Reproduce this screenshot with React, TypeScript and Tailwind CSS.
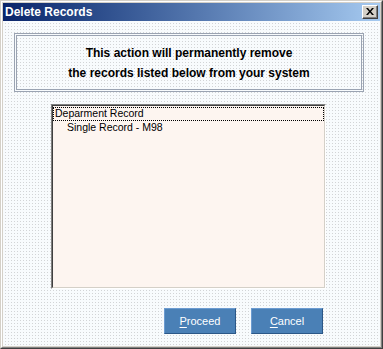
import React from "react";

const font = { fontFamily: '"Liberation Sans", Arial, sans-serif' };

const records = [
  { id: 1, label: "Deparment Record", depth: 0, focused: true },
  { id: 2, label: "Single Record - M98", depth: 1, focused: false },
];

const CloseButton = () => (
  <div className="border border-t-white border-l-white border-r-[#404040] border-b-[#404040]">
    <div className="w-[14px] h-[12px] bg-[#d4d0c8] border-r border-b border-[#808080] flex items-center justify-center">
      <svg width="8" height="7" viewBox="0 0 8 7">
        <path d="M0 0h2l2 2.5L6 0h2L5 3.5 8 7H6L4 4.5 2 7H0l3-3.5z" fill="#000" />
      </svg>
    </div>
  </div>
);

const DialogButton = ({ label }: { label: string }) => (
  <button
    className="w-[72px] h-[26px] bg-[#4a80b6] border border-t-[#6c9bd0] border-l-[#6c9bd0] border-r-[#2b5787] border-b-[#2b5787] text-white text-[11px]"
    style={font}
  >
    <span className="underline underline-offset-2">{label[0]}</span>
    {label.slice(1)}
  </button>
);

const DeleteRecordsDialog = () => {
  return (
    <div className="w-[383px] h-[349px] border border-t-[#d4d0c8] border-l-[#d4d0c8] border-r-[#404040] border-b-[#404040]">
      <div className="w-full h-full border border-t-white border-l-white border-r-[#808080] border-b-[#808080] bg-[#d4d0c8] p-px flex flex-col">
        {/* Title bar */}
        <div className="h-[18px] flex items-center justify-between pl-[2px] pr-[2px] bg-gradient-to-r from-[#0a246a] to-[#a6caf0]">
          <span className="text-white text-[12px] font-bold leading-none" style={font}>
            Delete Records
          </span>
          <CloseButton />
        </div>

        {/* Body */}
        <div className="flex-1 flex flex-col bg-[#f8fbfd] bg-[radial-gradient(circle_at_1px_1px,#b9d6f2_0.6px,transparent_0.7px),radial-gradient(circle_at_2.5px_2.5px,#d2d4d6_0.5px,transparent_0.6px)] bg-[length:3px_3px,3px_3px]">
          {/* Message box */}
          <div className="ml-[11px] mt-[12px] w-[350px] h-[59px] border-[3px] border-double border-[#9aa3b2] flex flex-col items-center justify-center">
            <p className="text-[12px] font-bold leading-[20px] text-black" style={font}>
              This action will permanently remove
            </p>
            <p className="text-[12px] font-bold leading-[20px] text-black" style={font}>
              the records listed below from your system
            </p>
          </div>

          {/* Records list */}
          <div className="ml-[48px] mt-[12px] w-[275px] h-[185px] border border-t-[#808080] border-l-[#808080] border-r-white border-b-white">
            <div className="w-full h-full border border-t-[#404040] border-l-[#404040] border-r-[#d4d0c8] border-b-[#d4d0c8] bg-[#fdf5f0] bg-[radial-gradient(circle_at_1px_1px,#e2d2ca_0.6px,transparent_0.7px)] bg-[length:3px_3px] pt-px">
              {records.map((record) => (
                <div
                  key={record.id}
                  className={`h-[14px] flex items-center text-[10.5px] text-black ${
                    record.focused ? "border border-dotted border-black pl-[1px]" : "pl-[14px]"
                  }`}
                  style={font}
                >
                  {record.label}
                </div>
              ))}
            </div>
          </div>

          {/* Actions */}
          <div className="mt-[19px] ml-[161px] flex gap-[15px]">
            <DialogButton label="Proceed" />
            <DialogButton label="Cancel" />
          </div>
        </div>
      </div>
    </div>
  );
};

export default function App() {
  return <DeleteRecordsDialog />;
}
